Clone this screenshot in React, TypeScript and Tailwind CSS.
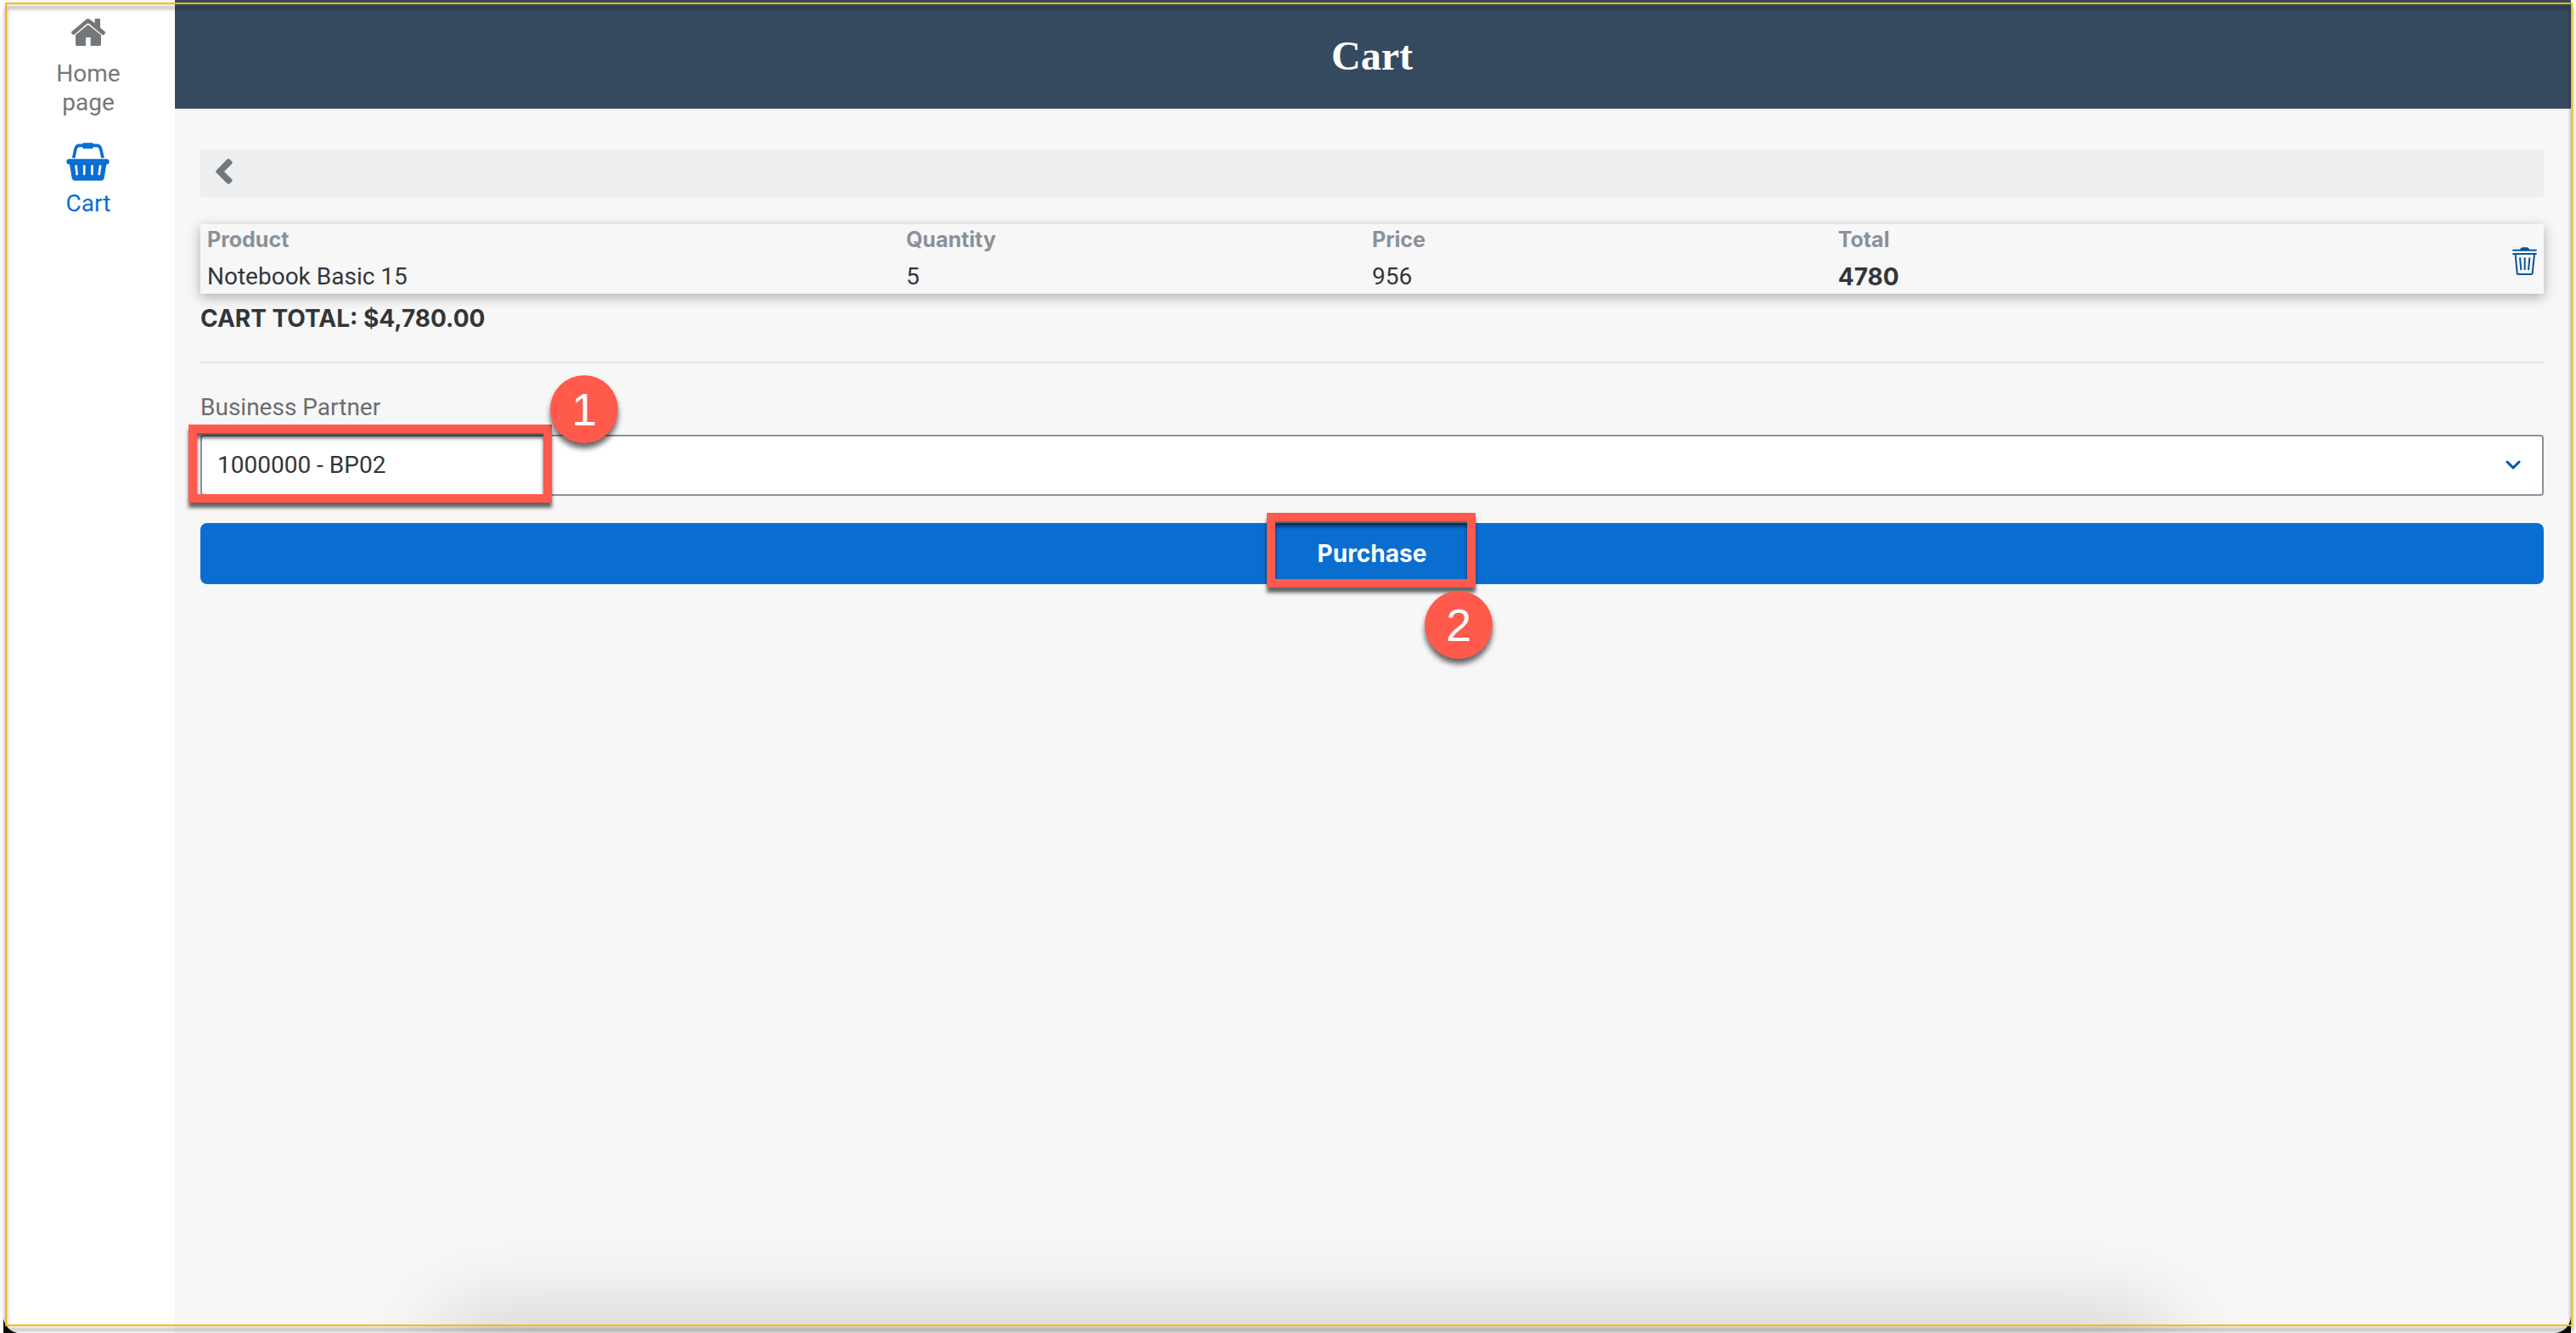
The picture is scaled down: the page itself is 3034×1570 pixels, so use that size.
function HomeIcon() {
  return (
    <svg viewBox="252 66 120 96" className="h-8 w-10" fill="currentColor" aria-hidden="true">
      <path d="M304 69Q311 63 318 69L335 82V66H354V98L370 111Q374 115 371 119L368 122Q364 125 360 122L315 84Q311 81 307 84L263 122Q259 125 256 121L253 118Q250 115 254 111Z" />
      <path d="M308 89Q311 87 314 89L357 124V157Q357 162 352 162H320V132H303V162H272Q267 162 267 157V124Z" />
    </svg>
  );
}

function BasketIcon() {
  return (
    <svg viewBox="234 502 154 136" className="h-[45px] w-[51px]" fill="none" stroke="currentColor" aria-hidden="true">
      <path d="M260 557L267 525Q270 512 280 512H344Q354 512 357 525L364 557" strokeWidth="11" />
      <rect x="292" y="503" width="38" height="20" rx="4" fill="currentColor" stroke="none" />
      <rect x="235" y="560" width="152" height="19" rx="9" fill="currentColor" stroke="none" />
      <path d="M245 574H378L369 628Q367 637 358 637H265Q256 637 254 628Z" fill="currentColor" stroke="none" />
      <path d="M269 585L272 614M298 585V614M326 585V614M355 585L351 614" stroke="white" strokeWidth="8" strokeLinecap="round" />
    </svg>
  );
}

function BackIcon() {
  return (
    <svg viewBox="762 562 60 90" className="h-[30px] w-5" fill="currentColor" aria-hidden="true">
      <path d="M764 603L802 564Q807 560 812 564L819 571Q823 576 819 580L792 607L819 634Q823 638 819 643L812 650Q807 653 802 649L764 611Q761 607 764 603Z" />
    </svg>
  );
}

function TrashIcon() {
  return (
    <svg viewBox="628 174 87 99" className="h-[33px] w-[29px]" fill="none" stroke="currentColor" strokeWidth="6" aria-hidden="true">
      <path d="M656 183Q657 175 665 175H679Q687 175 688 183Z" fill="currentColor" stroke="none" />
      <path d="M629 185H714M629 198H714" />
      <path d="M639 200L645 266Q645 270 649 270H695Q699 270 699 266L706 200" />
      <path d="M655 211L659 255M672 211V255M689 211L685 255" />
    </svg>
  );
}

function ChevronDown() {
  return (
    <svg viewBox="0 0 18 12" className="h-3 w-[18px]" fill="none" stroke="currentColor" strokeWidth="3" strokeLinecap="round" aria-hidden="true">
      <path d="M2 2L9 9L16 2" />
    </svg>
  );
}

const callout = "pointer-events-none absolute border-[10px] border-[#ff5a4c] drop-shadow-[0_6px_2px_rgba(0,0,0,0.6)]";
const marker =
  "pointer-events-none absolute flex size-20 items-center justify-center rounded-full bg-[#ff5a4c] font-['Liberation_Sans',sans-serif] text-[54px] leading-none font-normal text-white drop-shadow-[0_6px_3px_rgba(0,0,0,0.6)]";
const heading = "p-0 text-left font-['Inter',sans-serif] text-[25px] leading-9 font-bold text-[#89919a]";

const items = [{ product: "Notebook Basic 15", quantity: 5, price: 956, total: 4780 }];

export default function App() {
  return (
    <div className="relative flex min-h-screen overflow-hidden bg-white pr-[6px] pl-1 font-['Roboto',sans-serif] text-[28px] leading-[34px] text-[#32363a]">
      <div className="flex flex-1 bg-[#0d0d04]">
        <div className="relative flex flex-1 overflow-hidden rounded-b-[20px] bg-[#f7f7f7]">
          <nav className="flex w-[202px] shrink-0 flex-col items-center bg-white pt-[22px] pr-[2px] text-center">
            <a href="#home" className="flex w-24 flex-col items-center gap-4 text-[#74777a]">
              <HomeIcon />
              Home page
            </a>
            <a href="#cart" className="mt-[30px] flex flex-col items-center gap-[10px] text-[#0a6ed1]" aria-current="page">
              <BasketIcon />
              Cart
            </a>
          </nav>

          <div className="flex min-w-0 flex-1 flex-col">
            <header className="flex h-32 items-center justify-center bg-[#354a5f] pt-1 pr-[2px]">
              <h1 className="font-['Liberation_Serif',serif] text-5xl font-bold text-white">Cart</h1>
            </header>

            <main className="flex flex-col pt-12 pr-8 pl-[30px]">
              <div className="flex h-14 items-center bg-[#edeeef] px-4 pb-1">
                <button type="button" aria-label="Back" className="p-[2px] text-[#74777a]">
                  <BackIcon />
                </button>
              </div>

              <div className="mt-8 h-[82px] px-2 shadow-[0_4px_14px_rgba(0,0,0,0.3)]">
                <table className="w-full table-fixed border-collapse">
                  <colgroup>
                    <col className="w-[30%]" />
                    <col className="w-[20%]" />
                    <col className="w-[20%]" />
                    <col className="w-[25%]" />
                    <col className="w-[5%]" />
                  </colgroup>
                  {items.map((item) => (
                    <tbody key={item.product}>
                      <tr>
                        <th scope="col" className={heading}>Product</th>
                        <th scope="col" className={heading}>Quantity</th>
                        <th scope="col" className={heading}>Price</th>
                        <th scope="col" className={heading}>Total</th>
                        <td rowSpan={2} className="p-0 text-right align-middle">
                          <button type="button" aria-label={`Remove ${item.product}`} className="align-middle text-[#0854a0]">
                            <TrashIcon />
                          </button>
                        </td>
                      </tr>
                      <tr className="leading-[46px]">
                        <td className="p-0 pt-[3px]">{item.product}</td>
                        <td className="p-0 pt-[3px]">{item.quantity}</td>
                        <td className="p-0 pt-[3px]">{item.price}</td>
                        <td className="p-0 pt-[3px] font-['Inter',sans-serif] font-bold">{item.total}</td>
                      </tr>
                    </tbody>
                  ))}
                </table>
              </div>

              <p className="mt-3 font-['Inter',sans-serif] font-bold">CART TOTAL: $4,780.00</p>
              <hr className="mt-[34px] border-t-2 border-[#e5e5e5]" />

              <label htmlFor="partner" className="mt-[35px] text-[#6a6d70]">
                Business Partner
              </label>
              <div className="relative z-10 mt-[15px]">
                <select
                  id="partner"
                  defaultValue="1000000"
                  className="block h-[72px] w-full appearance-none rounded border-2 border-[#89919a] bg-white px-[18px] text-[#32363a]"
                >
                  <option value="1000000">1000000 - BP02</option>
                </select>
                <span className="pointer-events-none absolute top-0 right-[27px] flex h-full items-center text-[#0854a0]">
                  <ChevronDown />
                </span>
                <div className={`${callout} -top-3 -left-[14px] h-[92px] w-[428px]`} />
                <div className={`${marker} -top-[70px] left-[412px]`}>1</div>
              </div>

              <div className="relative mt-8">
                <button
                  type="button"
                  className="h-[72px] w-full rounded-lg bg-[#0a6ed1] font-['Inter',sans-serif] font-bold text-white"
                >
                  Purchase
                </button>
                <div className={`${callout} -top-3 left-1/2 -ml-[124px] h-[88px] w-[246px]`} />
                <div className={`${marker} top-20 left-1/2 ml-[62px]`}>2</div>
              </div>
            </main>
          </div>
          <div className="pointer-events-none absolute right-[490px] -bottom-10 left-[530px] h-10 rounded-3xl shadow-[0_0_100px_20px_rgba(0,0,0,0.18)]" />
        </div>
      </div>
      <div className="pointer-events-none absolute top-[3px] right-1 bottom-2 left-[6px] border-2 border-[#fbb900] drop-shadow-[0_5px_2px_rgba(0,0,0,0.5)]" />
    </div>
  );
}
